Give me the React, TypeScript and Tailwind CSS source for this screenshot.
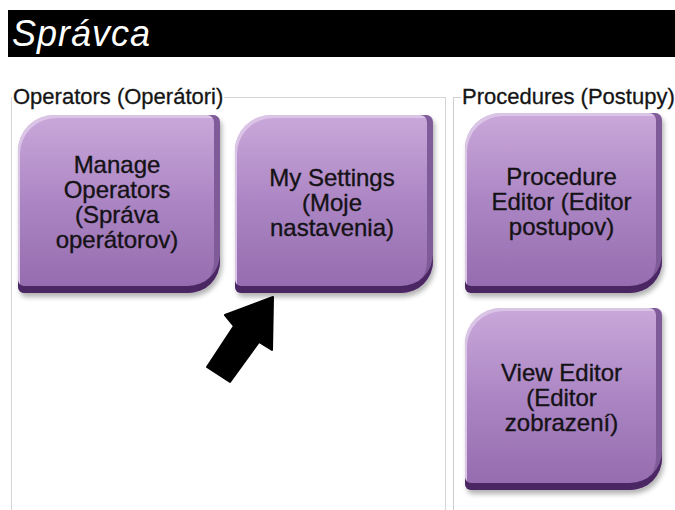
import React from "react";

const font = { fontFamily: '"Liberation Sans", Arial, sans-serif' };

function Tile({ lines, w, h }: { lines: string[]; w: string; h: string }) {
  return (
    <div
      className={`${w} ${h} shrink-0 flex flex-col items-center justify-center rounded-tl-[36px] rounded-tr-[7px] rounded-br-[32px] rounded-bl-[6px] bg-gradient-to-b from-[#caa8da] via-[#ab85c3] to-[#946bae] shadow-[inset_0_-7px_0_#4a2763,inset_-6px_0_0_#805b99,inset_2px_3px_0_#dbc5e6,2px_4px_5px_rgba(0,0,0,0.3)] pb-[4px] pr-[4px]`}
    >
      {lines.map((l, i) => (
        <div
          key={i}
          className="text-[24px] leading-[25px] text-[#151216] text-center whitespace-nowrap [-webkit-text-stroke:0.35px_#151216]"
        >
          {l}
        </div>
      ))}
    </div>
  );
}

export default function App() {
  return (
    <div className="relative w-[675px] h-[510px] overflow-hidden bg-white" style={font}>
      <div className="mt-[10px] ml-[8px] h-[47px] bg-black flex items-center pl-[4px]">
        <span className="text-white italic text-[36px] leading-none tracking-[1px]">Správca</span>
      </div>
      <div className="flex gap-[7px] pl-[11px] mt-[30px]">
        <fieldset className="w-[435px] h-[440px] shrink-0 border border-[#d6d6d6]">
          <legend className="ml-0 px-[1px] text-[22px] leading-[20px] text-[#151515] whitespace-nowrap [-webkit-text-stroke:0.3px_#151515]">
            Operators (Operátori)
          </legend>
          <div className="flex gap-[15px] pl-[6px] pt-[8px]">
            <Tile w="w-[202px]" h="h-[178px]" lines={["Manage", "Operators", "(Správa", "operátorov)"]} />
            <Tile w="w-[198px]" h="h-[178px]" lines={["My Settings", "(Moje", "nastavenia)"]} />
          </div>
        </fieldset>
        <fieldset className="w-[300px] h-[440px] shrink-0 border border-[#cfcfcf]">
          <legend className="ml-[7px] px-[1px] text-[22px] leading-[20px] text-[#151515] whitespace-nowrap [-webkit-text-stroke:0.3px_#151515]">
            Procedures (Postupy)
          </legend>
          <div className="flex flex-col gap-[15px] pl-[11px] pt-[6px]">
            <Tile w="w-[197px]" h="h-[180px]" lines={["Procedure", "Editor (Editor", "postupov)"]} />
            <Tile w="w-[197px]" h="h-[182px]" lines={["View Editor", "(Editor", "zobrazení)"]} />
          </div>
        </fieldset>
      </div>
      <svg className="absolute left-0 top-0" width="675" height="510" viewBox="0 0 675 510">
        <polygon
          points="273,297 272,350 259,342 230,382 207,367 234,326 225,315"
          fill="#000"
          stroke="#000"
          strokeWidth="2"
          strokeLinejoin="round"
        />
      </svg>
    </div>
  );
}
